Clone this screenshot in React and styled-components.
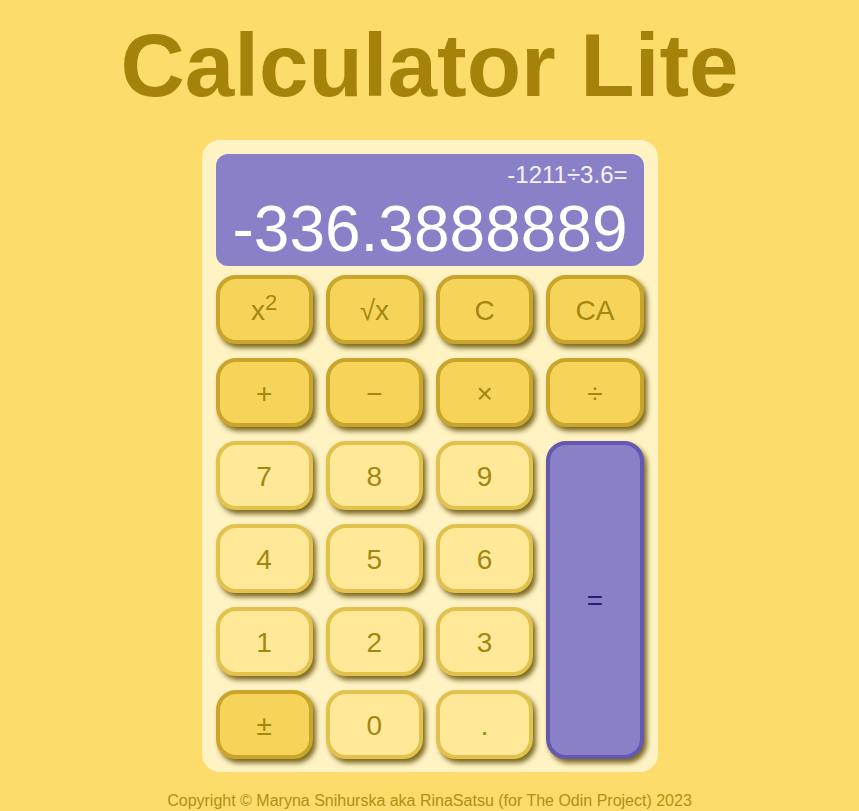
import React, { useState } from 'react'
import styled, { createGlobalStyle, css } from 'styled-components'

const GlobalStyle = createGlobalStyle`
    html, body {
        margin : 0;
        padding : 0;
        background-color : #FCDD6B;
        font-family : "Liberation Sans", Arial, sans-serif;
    }
`;

const Page = styled.div`
    display : flex;
    flex-direction : column;
    align-items : center;
    min-height : 100vh;
`;

const Title = styled.h1`
    margin : 16px 0 0;
    font-size : 89px;
    font-weight : 700;
    line-height : 98px;
    color : #A5830A;
`;

const Calculator = styled.div`
    margin-top : 26px;
    width : 428px;
    padding : 14px 14px 13px;
    background-color : #FFF3C4;
    border-radius : 18px;
`;

const Display = styled.div`
    height : 112px;
    box-sizing : border-box;
    padding : 7px 16px 0;
    background-color : #8A80C8;
    border-radius : 12px;
    color : #FFFFFF;
    text-align : right;
    overflow : hidden;
`;

const Expression = styled.div`
    font-size : 24px;
    line-height : 28px;
    color : #F6F2FF;
`;

const Result = styled.div`
    font-size : 64px;
    line-height : 76px;
    margin-top : 2px;
    white-space : nowrap;
`;

const Keys = styled.div`
    margin-top : 9px;
    display : grid;
    grid-template-columns : repeat(4, 1fr);
    grid-template-rows : repeat(6, 69px);
    column-gap : 13px;
    row-gap : 14px;
`;

const variants = {
    op : css`
        background-color : #F6D45A;
        border-color : #C9A62A;
        color : #A38710;
    `,
    num : css`
        background-color : #FFE999;
        border-color : #E2C24C;
        color : #A38710;
    `,
    equals : css`
        background-color : #8A80C8;
        border-color : #6558B0;
        color : #2C1B78;
        grid-column : 4;
        grid-row : 3 / span 4;
    `,
};

const Key = styled.button`
    box-sizing : border-box;
    border : 4px solid;
    border-radius : 20px;
    padding : 2px 0 0;
    font-family : inherit;
    font-size : 28px;
    cursor : pointer;
    box-shadow : 3px 4px 5px rgba(100, 80, 5, 0.85);
    ${p => variants[p.$kind]}
    sup {
        font-size : 22px;
        line-height : 0;
    }
`;

const Footer = styled.footer`
    margin-top : 20px;
    font-size : 16px;
    line-height : 18px;
    color : #B08F18;
    text-align : center;
`;

const keys = [
    { label : <>x<sup>2</sup></>, kind : 'op' },
    { label : '√x', kind : 'op' },
    { label : 'C', kind : 'op' },
    { label : 'CA', kind : 'op' },
    { label : '+', kind : 'op' },
    { label : '−', kind : 'op' },
    { label : '×', kind : 'op' },
    { label : '÷', kind : 'op' },
    { label : '7', kind : 'num' },
    { label : '8', kind : 'num' },
    { label : '9', kind : 'num' },
    { label : '=', kind : 'equals' },
    { label : '4', kind : 'num' },
    { label : '5', kind : 'num' },
    { label : '6', kind : 'num' },
    { label : '1', kind : 'num' },
    { label : '2', kind : 'num' },
    { label : '3', kind : 'num' },
    { label : '±', kind : 'op' },
    { label : '0', kind : 'num' },
    { label : '.', kind : 'num' },
];

const App = () => {
    const [expression] = useState('-1211÷3.6=');
    const [result] = useState('-336.3888889');

    return (
        <>
        <GlobalStyle />
        <Page>
            <Title>Calculator Lite</Title>
            <Calculator>
                <Display>
                    <Expression>{expression}</Expression>
                    <Result>{result}</Result>
                </Display>
                <Keys>
                    {keys.map((k, i) => (
                        <Key key={i} $kind={k.kind}>{k.label}</Key>
                    ))}
                </Keys>
            </Calculator>
            <Footer>Copyright © Maryna Snihurska aka RinaSatsu (for The Odin Project) 2023</Footer>
        </Page>
        </>
    )
};

export default App;
